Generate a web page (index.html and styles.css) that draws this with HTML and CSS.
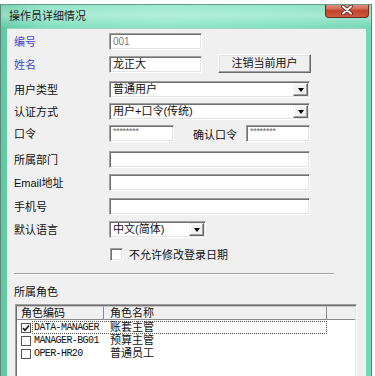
FILE: index.html
```html
<!DOCTYPE html>
<html>
<head>
<meta charset="utf-8">
<link rel="stylesheet" href="styles.css">
</head>
<body>
<div class="window">
  <div class="titlebar">
    <span class="title">操作员详细情况</span>
    <div class="close">
      <svg width="14" height="10" viewBox="0 0 14 10">
        <path d="M3 1.5 L11 8.5 M11 1.5 L3 8.5" stroke="#4a1f1a" stroke-width="3.6" stroke-linecap="round"/>
        <path d="M3 1.5 L11 8.5 M11 1.5 L3 8.5" stroke="#ffffff" stroke-width="2" stroke-linecap="round"/>
      </svg>
    </div>
  </div>
  <div class="client">
    <div class="form">
      <div class="label blue">编号</div>
      <div class="cell"><div class="edit w93 gray">001</div></div>

      <div class="label blue">姓名</div>
      <div class="cell top"><div class="edit w93">龙正大</div><div class="button">注销当前用户</div></div>

      <div class="label">用户类型</div>
      <div class="cell"><div class="combo w201"><span class="combo-text">普通用户</span><span class="drop"><i></i></span></div></div>

      <div class="label">认证方式</div>
      <div class="cell"><div class="combo w201"><span class="combo-text">用户+口令(传统)</span><span class="drop"><i></i></span></div></div>

      <div class="label">口令</div>
      <div class="cell"><div class="edit w65 pw">********</div><span class="label2">确认口令</span><div class="edit w64 pw">********</div></div>

      <div class="label">所属部门</div>
      <div class="cell"><div class="edit w201"></div></div>

      <div class="label">Email地址</div>
      <div class="cell"><div class="edit w201"></div></div>

      <div class="label">手机号</div>
      <div class="cell"><div class="edit w201"></div></div>

      <div class="label">默认语言</div>
      <div class="cell"><div class="combo w97"><span class="combo-text">中文(简体)</span><span class="drop"><i></i></span></div></div>

      <div class="label"></div>
      <div class="cell check-cell"><span class="checkbox"></span><span class="check-text">不允许修改登录日期</span></div>
    </div>

    <div class="separator"></div>
    <div class="section-label">所属角色</div>

    <div class="list">
      <div class="list-header">
        <div class="hcell first">角色编码</div>
        <div class="hcell second">角色名称</div>
        <div class="hcell third"></div>
      </div>
      <div class="list-body">
        <div class="row">
          <span class="lcheck">
            <svg width="8" height="8" viewBox="0 0 8 8"><path d="M1 4 L3 6.2 L7 1.5" fill="none" stroke="#111" stroke-width="1.6"/></svg>
          </span>
          <div class="item focus"><span class="code">DATA-MANAGER</span><span class="name">账套主管</span></div>
        </div>
        <div class="row">
          <span class="lcheck"></span>
          <div class="item"><span class="code">MANAGER-BG01</span><span class="name">预算主管</span></div>
        </div>
        <div class="row">
          <span class="lcheck"></span>
          <div class="item"><span class="code">OPER-HR20</span><span class="name">普通员工</span></div>
        </div>
      </div>
    </div>
  </div>
</div>
</body>
</html>
```
FILE: styles.css
```css
body {
  margin: 0;
  background: #ffffff;
  font-family: "Liberation Sans", "Noto Sans CJK SC", sans-serif;
  font-size: 11px;
  color: #111;
}

.window {
  width: 372px;
  height: 372px;
  margin-top: 4px;
  box-sizing: border-box;
  display: flex;
  flex-direction: column;
  overflow: hidden;
  border-left: 1px solid #5b8576;
  border-right: 1px solid #5b8576;
  border-top: 1px solid #6a9a88;
  background: linear-gradient(90deg, #5fc9a3 0%, #7ddfbe 12%, #8be6c8 45%, #7fe1c0 75%, #72d8b5 100%);
}

.titlebar {
  height: 23px;
  display: flex;
  justify-content: space-between;
  align-items: flex-start;
  background: linear-gradient(180deg, rgba(255,255,255,0.15) 0%, rgba(255,255,255,0.35) 45%, rgba(255,255,255,0) 100%);
}

.title {
  padding-left: 8px;
  line-height: 23px;
  font-size: 11px;
  color: #1a1a1a;
}

.close {
  width: 44px;
  height: 15px;
  margin-top: -2px;
  margin-right: 2px;
  box-sizing: border-box;
  border: 1px solid #6e2a20;
  border-top: none;
  border-radius: 0 0 4px 4px;
  background: linear-gradient(180deg, #e7a393 0%, #d66e58 40%, #c4402a 55%, #cf5a40 100%);
  display: flex;
  align-items: center;
  justify-content: center;
}

.client {
  flex: 1;
  margin: 0 5px 0 6px;
  background: #f0f0f0;
  padding: 4px 0 0 7px;
  border-top: 1px solid #a9cfc0;
}

.form {
  display: grid;
  grid-template-columns: 95px 1fr;
  grid-template-rows: 23px 25px 22px 22px 26px 23px 24px 23px 26px 14px;
}

.label {
  height: 17px;
  line-height: 18px;
  font-size: 11px;
  color: #111;
}

.label.blue {
  color: #4545cf;
}

.cell {
  display: flex;
  align-items: center;
  height: 17px;
}

.cell.top {
  align-items: flex-start;
}

.edit, .combo {
  height: 17px;
  box-sizing: border-box;
  background: #fff;
  border: 1px solid;
  border-color: #a0a0a0 #ffffff #ffffff #a0a0a0;
  box-shadow: inset 1px 1px 0 #6f6f6f, inset -1px -1px 0 #e3e3e3;
  padding: 0 3px;
  line-height: 15px;
  font-size: 11px;
  color: #111;
  white-space: nowrap;
  overflow: hidden;
}

.edit.gray {
  color: #7a7a7a;
  font-size: 10px;
}

.edit.pw {
  font-size: 9px;
  line-height: 10px;
  color: #666;
  letter-spacing: -0.3px;
}

.w93 { width: 93px; }
.w201 { width: 201px; }
.w65 { width: 65px; }
.w64 { width: 64px; }
.w97 { width: 97px; }

.button {
  width: 93px;
  height: 19px;
  margin-left: 16px;
  margin-top: -2px;
  box-sizing: border-box;
  background: #f0f0f0;
  border: 1px solid;
  border-color: #ffffff #696969 #696969 #ffffff;
  box-shadow: inset -1px -1px 0 #a0a0a0, inset 1px 1px 0 #e3e3e3;
  text-align: center;
  line-height: 17px;
  font-size: 11px;
}

.combo {
  display: flex;
  align-items: center;
  padding: 0 2px 0 3px;
}

.combo-text {
  flex: 1;
  line-height: 15px;
}

.drop {
  width: 15px;
  height: 13px;
  box-sizing: border-box;
  background: #f0f0f0;
  border: 1px solid;
  border-color: #f0f0f0 #696969 #696969 #f0f0f0;
  box-shadow: inset -1px -1px 0 #a0a0a0, inset 1px 1px 0 #fff;
  display: flex;
  align-items: center;
  justify-content: center;
  margin-right: -1px;
}

.drop i {
  width: 0;
  height: 0;
  border-left: 3px solid transparent;
  border-right: 3px solid transparent;
  border-top: 4px solid #000;
}

.label2 {
  margin-left: 19px;
  width: 53px;
  font-size: 11px;
}

.check-cell {
  height: 14px;
}

.checkbox {
  width: 13px;
  height: 13px;
  margin-left: 1px;
  box-sizing: border-box;
  background: #fff;
  border: 1px solid;
  border-color: #a0a0a0 #fff #fff #a0a0a0;
  box-shadow: inset 1px 1px 0 #6f6f6f, inset -1px -1px 0 #e3e3e3;
}

.check-text {
  margin-left: 6px;
  font-size: 11px;
}

.separator {
  width: 320px;
  margin-top: 12px;
  border-top: 1px solid #a0a0a0;
  border-bottom: 1px solid #fff;
}

.section-label {
  margin-top: 10px;
  line-height: 14px;
  font-size: 11px;
}

.list {
  margin-top: 5px;
  margin-left: 1px;
  width: 342px;
  height: 90px;
  box-sizing: border-box;
  background: #fff;
  border: 1px solid;
  border-color: #a0a0a0 #fff #fff #a0a0a0;
  box-shadow: inset 1px 1px 0 #6f6f6f, inset -1px -1px 0 #e3e3e3;
  padding: 1px 1px 0 1px;
}

.list-header {
  display: grid;
  grid-template-columns: 87px 223px 1fr;
  height: 14px;
  background: #f0f0f0;
}

.hcell {
  box-sizing: border-box;
  border-right: 1px solid #8a8a8a;
  border-bottom: 1px solid #8a8a8a;
  border-top: 1px solid #c8c8c8;
  line-height: 12px;
  font-size: 11px;
  padding-left: 4px;
}

.hcell.second {
  padding-left: 6px;
}

.hcell.third {
  border-right: none;
}

.list-body {
  padding-top: 1px;
}

.row {
  height: 13px;
  display: flex;
  align-items: center;
}

.lcheck {
  width: 10px;
  height: 10px;
  margin-left: 4px;
  box-sizing: border-box;
  border: 1px solid #555;
  background: #fff;
  display: flex;
  align-items: center;
  justify-content: center;
}

.item {
  margin-left: 1px;
  width: 295px;
  height: 13px;
  box-sizing: border-box;
  border: 1px solid transparent;
  display: flex;
  align-items: center;
}

.item.focus {
  border: 1px dotted #555;
}

.code {
  width: 76px;
  padding-left: 1px;
  font-family: "Liberation Mono", monospace;
  font-size: 10px;
  letter-spacing: -0.6px;
  color: #111;
  line-height: 11px;
}

.name {
  font-size: 11px;
  line-height: 11px;
}
```
